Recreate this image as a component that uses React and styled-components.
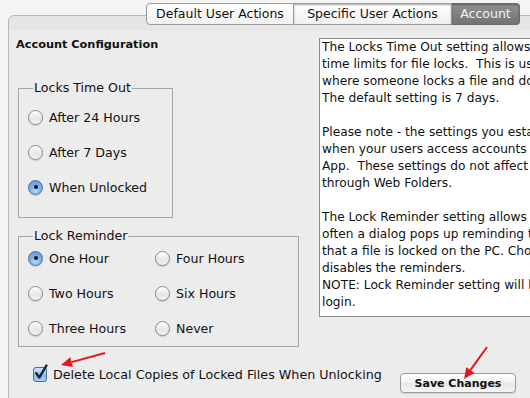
import React from 'react'
import styled, { createGlobalStyle } from 'styled-components'

const GlobalStyle = createGlobalStyle`
  html, body {
    margin: 0;
    padding: 0;
    background: #f4f4f4;
  }
  body {
    font-family: "DejaVu Sans", "Liberation Sans", sans-serif;
    color: #111;
  }
`

const helpLines = [
  'The Locks Time Out setting allows you to set',
  'time limits for file locks.  This is useful',
  "where someone locks a file and doesn't",
  'The default setting is 7 days.',
  '',
  'Please note - the settings you establish',
  'when your users access accounts through',
  'App.  These settings do not affect files',
  'through Web Folders.',
  '',
  'The Lock Reminder setting allows you',
  'often a dialog pops up reminding the',
  'that a file is locked on the PC. Choosing',
  'disables the reminders.',
  'NOTE: Lock Reminder setting will be',
  'login.',
]

const tabs = [
  { label: 'Default User Actions', width: 148 },
  { label: 'Specific User Actions', width: 158 },
  { label: 'Account', width: 68, active: true },
]

const Window = () => {
  return (
    <Screen>
      <GlobalStyle />
      <TabBar>
        {tabs.map((t, i) => (
          <Tab
            key={t.label}
            $width={t.width}
            $active={t.active}
            $first={i === 0}
            $last={i === tabs.length - 1}
          >
            {t.label}
          </Tab>
        ))}
      </TabBar>
      <Panel>
        <Body>
          <LeftColumn>
            <Heading>Account Configuration</Heading>
            <Group $width={155} $top={11} $bottom={20}>
              <Legend>Locks Time Out</Legend>
              <Options $cols={1}>
                <Radio label="After 24 Hours" />
                <Radio label="After 7 Days" />
                <Radio label="When Unlocked" checked />
              </Options>
            </Group>
            <Group $width={281} $top={4} $bottom={8} $gap={10}>
              <Legend>Lock Reminder</Legend>
              <Options $cols={2}>
                <Radio label="One Hour" checked />
                <Radio label="Four Hours" />
                <Radio label="Two Hours" />
                <Radio label="Six Hours" />
                <Radio label="Three Hours" />
                <Radio label="Never" />
              </Options>
            </Group>
          </LeftColumn>
          <HelpBox>
            {helpLines.map((l, i) => (
              <HelpLine key={i}>{l || '\u00a0'}</HelpLine>
            ))}
          </HelpBox>
        </Body>
        <Footer>
          <CheckRow>
            <CheckBox>
              <svg width="16" height="17" viewBox="0 0 16 17">
                <path d="M3.2 9.2 L6.4 13.4 L13.4 1.6" fill="none" stroke="#16213a" strokeWidth="2.4" strokeLinecap="round" strokeLinejoin="round" />
              </svg>
            </CheckBox>
            <span>Delete Local Copies of Locked Files When Unlocking</span>
          </CheckRow>
          <SaveButton>Save Changes</SaveButton>
        </Footer>
      </Panel>
      <Arrows width="530" height="398" viewBox="0 0 530 398">
        <Arrow x1={105} y1={353} x2={61} y2={365} />
        <Arrow x1={487} y1={347} x2={464} y2={379} />
      </Arrows>
    </Screen>
  )
}

const Radio = ({ label, checked }) => (
  <RadioRow>
    <RadioDot $checked={checked} />
    <span>{label}</span>
  </RadioRow>
)

const Arrow = ({ x1, y1, x2, y2 }) => {
  const a = Math.atan2(y2 - y1, x2 - x1)
  const len = 11
  const w = 5
  const bx = x2 - Math.cos(a) * len
  const by = y2 - Math.sin(a) * len
  const px = -Math.sin(a) * w
  const py = Math.cos(a) * w
  return (
    <g>
      <line x1={x1} y1={y1} x2={bx} y2={by} stroke="#e5161c" strokeWidth="2" />
      <polygon points={`${x2},${y2} ${bx + px},${by + py} ${bx - px},${by - py}`} fill="#e5161c" />
    </g>
  )
}

const Screen = styled.div`
  position: relative;
  width: 530px;
  height: 398px;
  overflow: hidden;
  background: #f4f4f4;
`

const TabBar = styled.div`
  position: relative;
  z-index: 1;
  display: flex;
  justify-content: flex-end;
  padding: 3px 10px 0 0;
  height: 22px;
`

const Tab = styled.div`
  box-sizing: border-box;
  width: ${(p) => p.$width}px;
  height: 22px;
  line-height: 20px;
  text-align: center;
  font-size: 12.5px;
  border: 1px solid ${(p) => (p.$active ? '#6a6a6a' : '#9a9a9a')};
  border-left: ${(p) => (p.$first ? '1px solid #9a9a9a' : 'none')};
  border-radius: ${(p) => (p.$first ? '4px 0 0 4px' : p.$last ? '0 4px 4px 0' : '0')};
  background: ${(p) =>
    p.$active
      ? 'linear-gradient(#8f8f8f, #747474)'
      : 'linear-gradient(#ffffff, #f1f1f1)'};
  color: ${(p) => (p.$active ? '#f4f4f4' : '#111')};
  box-shadow: ${(p) => (p.$active ? 'inset 0 1px 2px rgba(0,0,0,0.35)' : 'none')};
  & + & {
    box-shadow: ${(p) => (p.$active ? 'inset 0 1px 2px rgba(0,0,0,0.35)' : 'inset 1px 0 0 #d0d0d0')};
  }
`

const Panel = styled.div`
  margin: -10px 0 0 8px;
  width: 560px;
  height: 400px;
  border: 1px solid #b8b8b8;
  border-radius: 6px 0 0 0;
  background: linear-gradient(#e4e4e4 0, #e6e6e6 14px, #ececec 15px, #ececec 100%);
`

const Body = styled.div`
  display: grid;
  grid-template-columns: 310px 1fr;
  padding-top: 22px;
`

const LeftColumn = styled.div`
  padding-left: 7px;
`

const Heading = styled.div`
  font-weight: bold;
  font-size: 11.3px;
  line-height: 14px;
  margin-bottom: 28px;
`

const Group = styled.fieldset`
  box-sizing: border-box;
  width: ${(p) => p.$width}px;
  margin: ${(p) => p.$gap || 0}px 0 0 2px;
  padding: ${(p) => p.$top}px 0 ${(p) => p.$bottom}px 9px;
  border: 1px solid #a6a6a6;
`

const Legend = styled.legend`
  font-size: 12.6px;
  line-height: 16px;
  padding: 0 1px;
  margin-left: 5px;
`

const Options = styled.div`
  display: grid;
  grid-template-columns: repeat(${(p) => p.$cols}, 127px);
  row-gap: 15px;
`

const RadioRow = styled.label`
  display: flex;
  align-items: center;
  gap: 6px;
  height: 20px;
  font-size: 12.6px;
`

const RadioDot = styled.span`
  position: relative;
  box-sizing: border-box;
  width: 15px;
  height: 15px;
  border-radius: 50%;
  border: 1px solid ${(p) => (p.$checked ? '#4d6f9c' : '#8a8a8a')};
  background: ${(p) =>
    p.$checked
      ? 'radial-gradient(circle at 50% 75%, #b9d7fa 0, #7fb0ea 45%, #5b92d8 100%)'
      : 'linear-gradient(#ffffff, #e6e6e6 60%, #f4f4f4)'};
  box-shadow: 0 1px 1px rgba(0, 0, 0, 0.15);
  &::after {
    content: '';
    display: ${(p) => (p.$checked ? 'block' : 'none')};
    position: absolute;
    left: 4.5px;
    top: 4.5px;
    width: 4px;
    height: 4px;
    border-radius: 50%;
    background: #111;
  }
`

const HelpBox = styled.div`
  box-sizing: border-box;
  height: 279px;
  border: 1px solid #8a8a8a;
  background: #fff;
  padding: 0 0 0 2px;
  overflow: hidden;
  font-size: 12.2px;
  line-height: 17px;
  color: #111;
`

const HelpLine = styled.div`
  white-space: pre;
`

const Footer = styled.div`
  display: grid;
  grid-template-columns: 391px 116px;
  align-items: start;
  padding-top: 19px;
`

const CheckRow = styled.label`
  display: flex;
  align-items: center;
  gap: 6px;
  padding-left: 24px;
  height: 16px;
  font-size: 12.7px;
`

const CheckBox = styled.span`
  position: relative;
  box-sizing: border-box;
  width: 14px;
  height: 15px;
  border-radius: 3px;
  border: 1px solid #4d6f9c;
  background: linear-gradient(#cfe2fa, #8fbbee 60%, #a8ccf4);
  svg {
    position: absolute;
    left: -1px;
    top: -4px;
  }
`

const SaveButton = styled.button`
  box-sizing: border-box;
  margin-top: 7px;
  width: 116px;
  height: 20px;
  border: 1px solid #9a9a9a;
  border-radius: 4px;
  background: linear-gradient(#ffffff, #f0f0f0 50%, #e6e6e6 51%, #f6f6f6);
  box-shadow: 0 1px 1px rgba(0, 0, 0, 0.12);
  font-family: "DejaVu Sans", sans-serif;
  font-weight: bold;
  font-size: 11px;
  color: #111;
  padding: 0;
`

const Arrows = styled.svg`
  position: absolute;
  left: 0;
  top: 0;
  pointer-events: none;
  z-index: 2;
`

export default Window
